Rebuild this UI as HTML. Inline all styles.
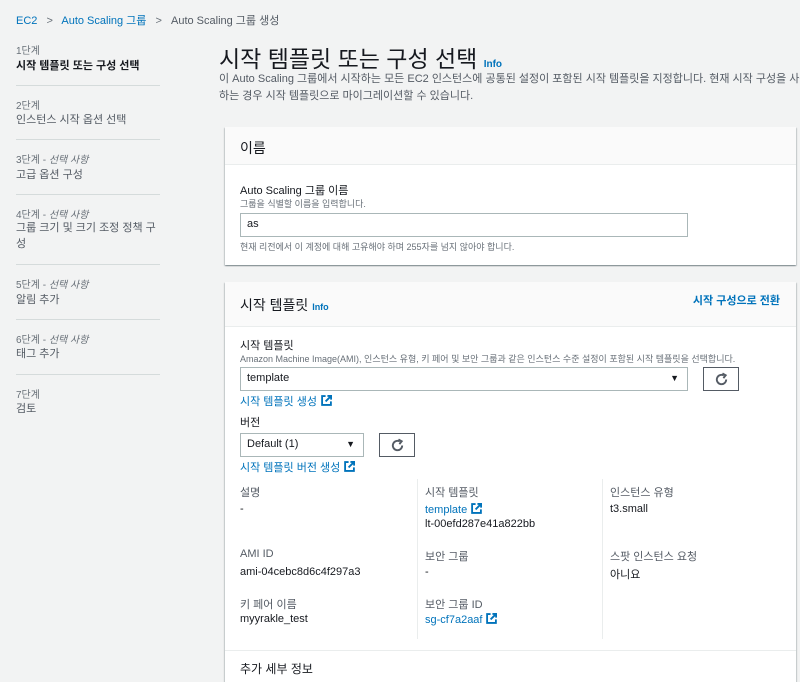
<!DOCTYPE html>
<html><head><meta charset="utf-8"><style>
*{margin:0;padding:0;box-sizing:border-box}
body{width:800px;height:675px;overflow:hidden;background:#f2f3f3;font-family:"Liberation Sans","Noto Sans CJK KR",sans-serif;color:#16191f;position:relative;font-size:12px}
.a{position:absolute;white-space:nowrap}
.link{color:#0073bb}
.sm{font-size:10px;color:#687078}
.sep{position:absolute;left:16px;width:144px;height:1px;background:#d5dbdb}
.panel{position:absolute;left:225px;width:571px;background:#fff;box-shadow:0 1px 1px rgba(0,28,36,.3),1px 1px 1px rgba(0,28,36,.15),-1px 1px 1px rgba(0,28,36,.15)}
.ph{position:absolute;left:0;top:0;right:0;background:#fafafa;border-bottom:1px solid #eaeded}
.inp{position:absolute;border:1px solid #aab7b8;background:#fff;height:24px;padding:4px 6px;font-size:11px}
.btn{position:absolute;border:1px solid #545b64;background:#fff;height:24px}
.ext{width:11px;height:11px;vertical-align:-1px;margin-left:4px}
.lab{font-size:11px;color:#545b64}
.val{font-size:11px}
</style></head><body>
<svg width="0" height="0" style="position:absolute"><defs><symbol id="e" viewBox="0 0 12 12"><path d="M5 1.2H1.2V10.8H10.8V7" fill="none" stroke="#0073bb" stroke-width="2"/><path d="M7 1H11V5M11 1L5 7" fill="none" stroke="#0073bb" stroke-width="2"/></symbol>
<symbol id="r" viewBox="0 0 16 16"><path d="M13 8A5 5 0 1 1 10.5 3.7" fill="none" stroke="#545b64" stroke-width="2"/><path d="M9 1.5L12.5 3.5L10 6.5" fill="none" stroke="#545b64" stroke-width="2"/></symbol></defs></svg>
<div class="a" style="left:16px;top:12px;font-size:11px"><span class="link">EC2</span> <span style="color:#687078;margin:0 6px">&gt;</span> <span class="link">Auto Scaling 그룹</span> <span style="color:#687078;margin:0 6px">&gt;</span> <span style="color:#545b64">Auto Scaling 그룹 생성</span></div>

<div class="a sm" style="left:16px;top:42px">1단계</div>
<div class="a" style="left:16px;top:57px;font-size:11px;font-weight:bold">시작 템플릿 또는 구성 선택</div>
<div class="sep" style="top:85px"></div>
<div class="a sm" style="left:16px;top:97px">2단계</div>
<div class="a" style="left:16px;top:111px;font-size:11px;color:#545b64">인스턴스 시작 옵션 선택</div>
<div class="sep" style="top:139px"></div>
<div class="a sm" style="left:16px;top:151px">3단계 - <i>선택 사항</i></div>
<div class="a" style="left:16px;top:166px;font-size:11px;color:#545b64">고급 옵션 구성</div>
<div class="sep" style="top:194px"></div>
<div class="a sm" style="left:16px;top:206px">4단계 - <i>선택 사항</i></div>
<div class="a" style="left:16px;top:220px;font-size:11px;color:#545b64;line-height:16px;white-space:normal;width:145px">그룹 크기 및 크기 조정 정책 구성</div>
<div class="sep" style="top:264px"></div>
<div class="a sm" style="left:16px;top:276px">5단계 - <i>선택 사항</i></div>
<div class="a" style="left:16px;top:291px;font-size:11px;color:#545b64">알림 추가</div>
<div class="sep" style="top:319px"></div>
<div class="a sm" style="left:16px;top:331px">6단계 - <i>선택 사항</i></div>
<div class="a" style="left:16px;top:345px;font-size:11px;color:#545b64">태그 추가</div>
<div class="sep" style="top:374px"></div>
<div class="a sm" style="left:16px;top:386px">7단계</div>
<div class="a" style="left:16px;top:400px;font-size:11px;color:#545b64">검토</div>

<div class="a" style="left:219px;top:40px;font-size:23px;color:#16191f">시작 템플릿 또는 구성 선택 <span style="font-size:10px;font-weight:bold;color:#0073bb">Info</span></div>
<div class="a" style="left:219px;top:71px;font-size:11px;color:#545b64;line-height:17px">이 Auto Scaling 그룹에서 시작하는 모든 EC2 인스턴스에 공통된 설정이 포함된 시작 템플릿을 지정합니다. 현재 시작 구성을 사용<br>하는 경우 시작 템플릿으로 마이그레이션할 수 있습니다.</div>

<div class="panel" style="top:127px;height:138px">
 <div class="ph" style="height:38px"><div class="a" style="left:15px;top:11px;font-size:14px">이름</div></div>
 <div class="a" style="left:15px;top:55px;font-size:11px">Auto Scaling 그룹 이름</div>
 <div class="a sm" style="left:15px;top:70px;font-size:9px">그룹을 식별할 이름을 입력합니다.</div>
 <div class="inp" style="left:15px;top:86px;width:448px">as</div>
 <div class="a sm" style="left:15px;top:113px;font-size:9px">현재 리전에서 이 계정에 대해 고유해야 하며 255자를 넘지 않아야 합니다.</div>
</div>

<div class="panel" style="top:282px;height:400px">
 <div class="ph" style="height:45px"><div class="a" style="left:15px;top:13px;font-size:14px">시작 템플릿 <span style="font-size:9px;font-weight:bold;color:#0073bb">Info</span></div>
 <div class="a link" style="right:16px;top:10px;font-size:11px;font-weight:bold">시작 구성으로 전환</div></div>
 <div class="a" style="left:15px;top:55px;font-size:11px">시작 템플릿</div>
 <div class="a sm" style="left:15px;top:70px;font-size:9px">Amazon Machine Image(AMI), 인스턴스 유형, 키 페어 및 보안 그룹과 같은 인스턴스 수준 설정이 포함된 시작 템플릿을 선택합니다.</div>
 <div class="inp" style="left:15px;top:85px;width:448px">template<span style="position:absolute;right:8px;top:5px;font-size:9px">▼</span></div>
 <div class="btn" style="left:478px;top:85px;width:36px"><svg style="position:absolute;left:10px;top:4px" width="15" height="15"><use href="#r"/></svg></div>
 <div class="a link" style="left:15px;top:111px;font-size:11px">시작 템플릿 생성<svg class="ext"><use href="#e"/></svg></div>
 <div class="a" style="left:15px;top:132px;font-size:11px">버전</div>
 <div class="inp" style="left:15px;top:151px;width:124px">Default (1)<span style="position:absolute;right:8px;top:5px;font-size:9px">▼</span></div>
 <div class="btn" style="left:154px;top:151px;width:36px"><svg style="position:absolute;left:10px;top:4px" width="15" height="15"><use href="#r"/></svg></div>
 <div class="a link" style="left:15px;top:177px;font-size:11px">시작 템플릿 버전 생성<svg class="ext"><use href="#e"/></svg></div>

 <div class="a" style="left:192px;top:197px;width:1px;height:160px;background:#eaeded"></div>
 <div class="a" style="left:377px;top:197px;width:1px;height:160px;background:#eaeded"></div>

 <div class="a lab" style="left:15px;top:202px">설명</div>
 <div class="a val" style="left:15px;top:221px">-</div>
 <div class="a lab" style="left:15px;top:266px">AMI ID</div>
 <div class="a val" style="left:15px;top:284px">ami-04cebc8d6c4f297a3</div>
 <div class="a lab" style="left:15px;top:314px">키 페어 이름</div>
 <div class="a val" style="left:15px;top:331px">myyrakle_test</div>

 <div class="a lab" style="left:200px;top:202px">시작 템플릿</div>
 <div class="a val link" style="left:200px;top:221px">template<svg class="ext"><use href="#e"/></svg></div>
 <div class="a val" style="left:200px;top:236px">lt-00efd287e41a822bb</div>
 <div class="a lab" style="left:200px;top:266px">보안 그룹</div>
 <div class="a val" style="left:200px;top:284px">-</div>
 <div class="a lab" style="left:200px;top:314px">보안 그룹 ID</div>
 <div class="a val link" style="left:200px;top:331px">sg-cf7a2aaf<svg class="ext"><use href="#e"/></svg></div>

 <div class="a lab" style="left:385px;top:202px">인스턴스 유형</div>
 <div class="a val" style="left:385px;top:221px">t3.small</div>
 <div class="a lab" style="left:385px;top:266px">스팟 인스턴스 요청</div>
 <div class="a val" style="left:385px;top:284px">아니요</div>

 <div class="a" style="left:0;right:0;top:368px;height:1px;background:#eaeded"></div>
 <div class="a" style="left:15px;top:378px;font-size:12px">추가 세부 정보</div>
</div>
</body></html>
